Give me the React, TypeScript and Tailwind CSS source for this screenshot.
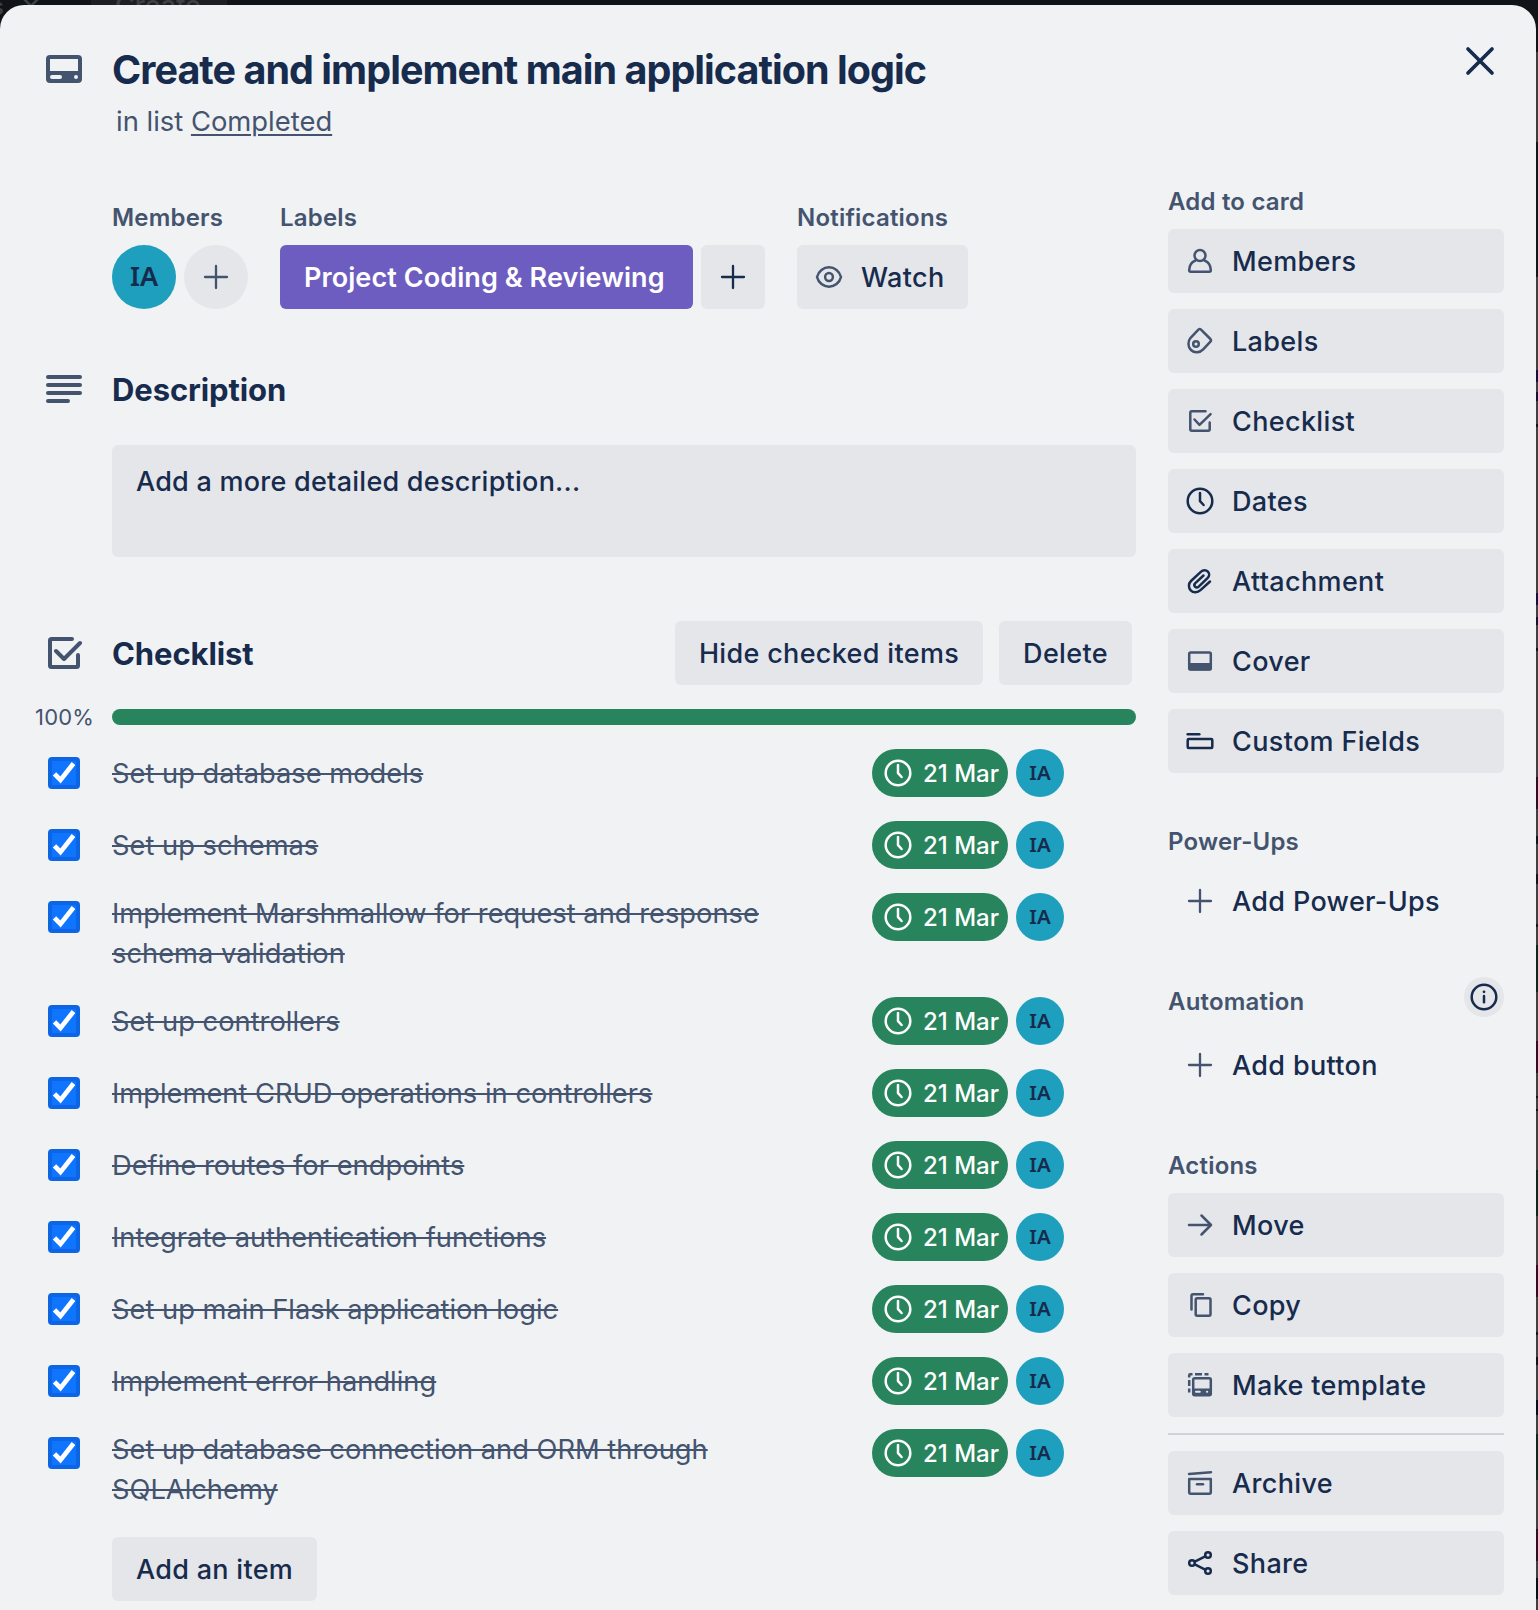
import React from "react";

const ink = "text-[#172b4d]";
const sub = "text-[#44546f]";

type Item = { lines: string[] };

const items: Item[] = [
  { lines: ["Set up database models"] },
  { lines: ["Set up schemas"] },
  { lines: ["Implement Marshmallow for request and response", "schema validation"] },
  { lines: ["Set up controllers"] },
  { lines: ["Implement CRUD operations in controllers"] },
  { lines: ["Define routes for endpoints"] },
  { lines: ["Integrate authentication functions"] },
  { lines: ["Set up main Flask application logic"] },
  { lines: ["Implement error handling"] },
  { lines: ["Set up database connection and ORM through", "SQLAlchemy"] },
];

/* Board sliver visible beside the dialog, top to bottom */
const sliver = [
  "h-[52px] bg-[#101418]",
  "h-[90px] bg-[#3c3d3e]",
  "h-[135px] bg-[#10181d]",
  "h-[93px] bg-[#3f4041]",
  "h-[12px] bg-[#15103b]",
  "h-[10px] bg-[#3f4041]",
  "h-[9px] bg-[#15103b]",
  "h-[23px] bg-[#3f4041]",
  "h-[3px] bg-[#0e1620]",
  "h-[166px] bg-[#3f4041]",
  "h-[12px] bg-[#15103b]",
  "h-[12px] bg-[#3f4041]",
  "h-[8px] bg-[#15103b]",
  "h-[23px] bg-[#3f4041]",
  "h-[3px] bg-[#0e1620]",
  "h-[126px] bg-[#3f4041]",
  "h-[32px] bg-[#300d22]",
  "h-[27px] bg-[#3f4041]",
  "h-[8px] bg-[#0e1620]",
  "h-[30px] bg-[#3f4041]",
  "h-[10px] bg-[#0e1620]",
  "h-[40px] bg-[#3f4041]",
  "h-[3px] bg-[#0e1620]",
  "h-[18px] bg-[#3f4041]",
  "h-[47px] bg-[#07291f]",
  "h-[49px] bg-[#3f4041]",
  "h-[32px] bg-[#300d22]",
  "h-[23px] bg-[#3f4041]",
  "h-[2px] bg-[#0e1620]",
  "h-[11px] bg-[#3f4041]",
  "h-[2px] bg-[#0e1620]",
  "h-[59px] bg-[#3f4041]",
  "h-[46px] bg-[#07291f]",
  "h-[49px] bg-[#3f4041]",
  "h-[32px] bg-[#300d22]",
  "h-[35px] bg-[#3f4041]",
  "h-[3px] bg-[#0e1620]",
  "h-[22px] bg-[#3f4041]",
  "h-[8px] bg-[#0e1620]",
  "h-[35px] bg-[#3f4041]",
  "h-[15px] bg-[#060f1c]",
  "h-[19px] bg-[#3f4041]",
  "h-[46px] bg-[#07291f]",
  "h-[49px] bg-[#3f4041]",
  "h-[32px] bg-[#300d22]",
  "h-[17px] bg-[#3f4041]",
  "h-[21px] bg-[#060f1c]",
  "h-[11px] bg-[#3f4041]",
];

/* 32px icons, drawn on a 32 unit grid */
function Icon({ children, color = sub }: { children: React.ReactNode; color?: string }) {
  return (
    <svg
      viewBox="0 0 32 32"
      className={"size-8 shrink-0 " + color}
      fill="none"
      stroke="currentColor"
      strokeWidth="2.5"
      strokeLinecap="round"
      strokeLinejoin="round"
    >
      {children}
    </svg>
  );
}

const Plus = ({ color = sub }: { color?: string }) => (
  <Icon color={color}>
    <path d="M5 16H27M16 5V27" strokeWidth="2.3" />
  </Icon>
);
const Eye = () => (
  <Icon>
    <path d="M4 16C5.500 10 10.500 6.300 16 6.300S26.500 10 28 16C26.500 22 21.500 25.700 16 25.700S5.500 22 4 16Z" />
    <circle cx="16" cy="16" r="3.900" />
  </Icon>
);
const User = () => (
  <Icon>
    <circle cx="16" cy="10.500" r="5.500" />
    <path d="M11.500 15.500C7.700 17 5.200 20.800 5.200 25.300Q5.200 26.800 6.700 26.800H25.300Q26.800 26.800 26.800 25.300C26.800 20.800 24.300 17 20.500 15.500" />
  </Icon>
);
const Tag = () => (
  <Icon>
    <path d="M14.400 4.600Q15.700 3.400 17 4.600L26.400 14Q27.600 15.300 26.400 16.600L19.200 24.300C15.700 28.100 10.300 28.200 7 25S3.600 16.300 6.600 12.800Z" />
    <circle cx="12" cy="19" r="2.800" />
  </Icon>
);
const CheckSquare = () => (
  <Icon>
    <path d="M21.500 6.300H7.800Q6.300 6.300 6.300 7.800V24.200Q6.300 25.700 7.800 25.700H24.200Q25.700 25.700 25.700 24.200V17.500" />
    <path d="M10.500 14.500L15.500 19.800L26.600 9.200" />
  </Icon>
);
const ClockIcon = ({ color = ink }: { color?: string }) => (
  <Icon color={color}>
    <circle cx="16" cy="16" r="12.300" />
    <path d="M16 8V16.200L19.600 20" />
  </Icon>
);
const Clip = () => (
  <Icon color={ink}>
    <path d="M26 16.500L16.500 25.200C13.300 28.200 9 27.700 6.700 25.300S4.200 18.800 7 16L16.800 6.900C19 4.800 22.100 4.800 23.900 6.700S25.500 11.300 23.500 13.200L14.700 21.600C13.500 22.800 11.900 22.700 11 21.700S10.200 19.200 11.300 18.100L19.500 10.500" />
  </Icon>
);
const Cover = () => (
  <Icon>
    <rect x="5.200" y="7.500" width="21.600" height="17" rx="1.500" />
    <path d="M4 18H28V23.500Q28 25.500 26 25.500H6Q4 25.500 4 23.500Z" fill="currentColor" stroke="none" />
  </Icon>
);
const Fields = () => (
  <Icon color={ink}>
    <path d="M3.700 9.200H15.300" />
    <rect x="3.700" y="14" width="24.600" height="9" rx="1" />
  </Icon>
);
const Arrow = () => (
  <Icon>
    <path d="M5 16H27M17.500 6.500L27 16L17.500 25.500" />
  </Icon>
);
const Copy = () => (
  <Icon>
    <path d="M19 5.200H9Q7.500 5.200 7.500 6.700V20.500" />
    <rect x="11.700" y="9.200" width="14.800" height="17.600" rx="1.500" />
  </Icon>
);
const Template = () => (
  <Icon>
    <path d="M5.200 8.500V6.200Q5.200 5.200 6.200 5.200H8.500M11 5.200H18M20.500 5.200H24.500M5.200 11V17M5.200 19.500V23.500" strokeLinecap="butt" />
    <rect x="9.200" y="9.200" width="17.600" height="17" rx="1.500" />
    <path d="M9.500 19.500H27V25Q27 26.500 25.500 26.500H11Q9.500 26.500 9.500 25Z" fill="currentColor" stroke="none" />
    <path d="M12 22.800H15.800M23 22.800H23.200" stroke="#e4e6ea" strokeWidth="2" />
  </Icon>
);
const Archive = () => (
  <Icon>
    <path d="M5 7L27 5.200" />
    <path d="M5.200 12H26.800V25.300Q26.800 26.800 25.300 26.800H6.700Q5.200 26.800 5.200 25.300Z" />
    <path d="M13 17.300H19" />
  </Icon>
);
const Share = () => (
  <Icon color={ink}>
    <circle cx="8" cy="16" r="2.800" />
    <circle cx="24" cy="8" r="2.800" />
    <circle cx="24" cy="24" r="2.800" />
    <path d="M10.800 14.600L21.200 9.400M10.800 17.400L21.200 22.600" />
  </Icon>
);

function SideButton({ icon, label, ghost }: { icon: React.ReactNode; label: string; ghost?: boolean }) {
  return (
    <button
      className={
        "flex h-16 w-full items-center gap-4 rounded-md pl-4 text-left text-[27px] leading-10 font-medium tracking-[0.35px] " +
        ink +
        (ghost ? "" : " bg-[#e4e6ea]")
      }
    >
      {icon}
      <span className="pt-0.5 whitespace-nowrap">{label}</span>
    </button>
  );
}

function SideTitle({ children }: { children: React.ReactNode }) {
  return <h3 className={"text-[24px] leading-8 font-semibold tracking-[0.2px] " + sub}>{children}</h3>;
}

function Checkbox() {
  return (
    <svg viewBox="0 0 32 32" className="size-8 shrink-0">
      <rect width="32" height="32" rx="4" fill="#0c66e4" />
      <rect x="4" y="4" width="24" height="24" fill="#0f75ff" />
      <path d="M6.500 16.800L12.500 23L25.500 6.500" fill="none" stroke="#fff" strokeWidth="4.700" />
    </svg>
  );
}

function Row({ lines }: Item) {
  const multi = lines.length > 1;
  return (
    <li className={"flex items-start " + (multi ? "h-[104px]" : "h-[72px]")}>
      <div className="flex h-[72px] w-16 shrink-0 items-center">
        <Checkbox />
      </div>
      <div
        className={
          "w-[760px] text-[27.300px] leading-10 line-through decoration-2 " + sub + (multi ? " pt-[13px]" : " pt-[17px]")
        }
      >
        {lines.map((l) => (
          <div key={l} className="whitespace-nowrap">
            {l}
          </div>
        ))}
      </div>
      <div className="flex h-[72px] items-center gap-2">
        <div className="flex h-12 w-[136px] items-center gap-[9px] rounded-full bg-[#28845c] pl-[10px] text-[24px] leading-8 font-medium text-white">
          <ClockIcon color="text-white" />
          <span className="pt-0.5 whitespace-nowrap">21 Mar</span>
        </div>
        <div className={"flex size-12 items-center justify-center rounded-full bg-[#1d9fbd] pb-0.5 font-['Noto_Sans',sans-serif] text-[20.500px] leading-none font-semibold " + ink}>
          IA
        </div>
      </div>
    </li>
  );
}

export default function App() {
  return (
    <div className="relative isolate flex h-[1610px] w-[1538px] overflow-hidden bg-[#101418] font-['Inter',sans-serif]">
      {/* Dimmed navigation bar behind the dialog */}
      <div className="absolute top-0 left-0 -z-10 flex h-10 w-full text-[#3e4144]">
        <span className="-mt-[9px] -ml-[9px] text-[24px] leading-8 font-medium">s</span>
        <svg viewBox="0 0 24 12" className="-mt-[5px] ml-[15px] h-3 w-6" fill="none" stroke="currentColor" strokeWidth="2.600">
          <path d="M1 0L12 11L23 0" />
        </svg>
        <div className="absolute top-0 left-[91px] h-8 w-[136px] bg-[#1d1f22]">
          <span className="absolute -top-[12px] left-6 text-[27px] leading-9 font-medium">Create</span>
        </div>
      </div>

      <div className="mt-[5px] flex h-[1605px] w-[1536px] shrink-0 rounded-t-[24px] bg-[#f1f2f4]">
        <main className="w-[1136px] shrink-0">
          <header className="flex pt-[41px] pl-12">
            <svg viewBox="0 0 36 28" className={"mt-[9px] -ml-[2px] h-7 w-9 shrink-0 " + sub}>
              <path
                fill="currentColor"
                fillRule="evenodd"
                d="M4 0H32Q36 0 36 4V24Q36 28 32 28H4Q0 28 0 24V4Q0 0 4 0ZM4 4V16H32V4ZM6 20A2 2 0 0 0 6 24H14A2 2 0 0 0 14 20ZM30 20A2 2 0 1 0 30 24A2 2 0 1 0 30 20Z"
              />
            </svg>
            <div className="ml-[30px]">
              <h1 className={"text-[39.500px] leading-[48px] font-bold tracking-[-0.960px] whitespace-nowrap " + ink}>
                Create and implement main application logic
              </h1>
              <p className={"mt-[7px] pl-1 text-[27.400px] leading-10 " + sub}>
                in list <a className="underline decoration-2 underline-offset-[3px]">Completed</a>
              </p>
            </div>
          </header>

          <div className="mt-[61px] ml-28 flex">
            <section className="w-[168px]">
              <SideTitle>Members</SideTitle>
              <div className="mt-[11px] flex gap-2">
                <div className={"flex size-16 items-center justify-center rounded-full bg-[#1d9fbd] pb-[3px] font-['Noto_Sans',sans-serif] text-[27px] leading-none font-semibold " + ink}>
                  IA
                </div>
                <button className="flex size-16 items-center justify-center rounded-full bg-[#e4e6ea]">
                  <Plus />
                </button>
              </div>
            </section>
            <section className="w-[517px]">
              <SideTitle>Labels</SideTitle>
              <div className="mt-[11px] flex gap-2">
                <div className="flex h-16 w-[413px] items-center rounded-md bg-[#6e5dc0] pt-0.5 pl-6 text-[27px] font-semibold tracking-[0.080px] whitespace-nowrap text-white">
                  Project Coding &amp; Reviewing
                </div>
                <button className="flex size-16 items-center justify-center rounded-md bg-[#e4e6ea]">
                  <Plus color={ink} />
                </button>
              </div>
            </section>
            <section>
              <SideTitle>Notifications</SideTitle>
              <button className={"mt-[11px] flex h-16 w-[171px] items-center gap-4 rounded-md bg-[#e4e6ea] pl-4 text-[27px] font-medium tracking-[0.350px] " + ink}>
                <Eye />
                <span className="pt-0.5">Watch</span>
              </button>
            </section>
          </div>

          <section className="mt-16 pl-12">
            <div className="flex h-8 items-center">
              <svg viewBox="0 0 36 28" className={"-ml-[2px] h-7 w-9 " + sub} stroke="currentColor" strokeWidth="4" strokeLinecap="round">
                <path d="M2 2H34M2 10H34M2 18H34M2 26H22" />
              </svg>
              <h2 className={"ml-[30px] pt-0.5 text-[31px] leading-10 font-bold tracking-[-0.100px] " + ink}>Description</h2>
            </div>
            <div className={"mt-10 ml-16 h-28 rounded-md bg-[#e4e6ea] px-6 pt-[17px] text-[27px] leading-10 font-medium tracking-[0.250px] " + ink}>
              Add a more detailed description...
            </div>
          </section>

          <section className="mt-16 pl-12">
            <div className="flex h-16 items-center">
              <svg viewBox="0 0 34 32" className={"h-8 w-[34px] " + sub} fill="none" stroke="currentColor" strokeWidth="4" strokeLinecap="round" strokeLinejoin="round">
                <path d="M24 2H3.500Q2 2 2 3.500V28.500Q2 30 3.500 30H28.500Q30 30 30 28.500V18" />
                <path d="M8 14L16 22L32 6" />
              </svg>
              <h2 className={"ml-[30px] pt-0.5 text-[31px] leading-10 font-bold tracking-[-0.100px] " + ink}>Checklist</h2>
              <div className={"mr-1 ml-auto flex gap-4 text-[27px] font-medium tracking-[0.330px] " + ink}>
                <button className="h-16 w-[308px] rounded-md bg-[#e4e6ea] pt-0.5 whitespace-nowrap">Hide checked items</button>
                <button className="h-16 w-[133px] rounded-md bg-[#e4e6ea] pt-0.5">Delete</button>
              </div>
            </div>
            <div className="mt-6 flex h-4 items-center">
              <span className={"-ml-[13px] w-[77px] text-[22px] leading-4 tracking-[0.200px] " + sub}>100%</span>
              <div className="h-4 flex-1 rounded-full bg-[#28845c]" />
            </div>
            <ul className="mt-3">
              {items.map((it) => (
                <Row key={it.lines[0]} lines={it.lines} />
              ))}
            </ul>
            <button className={"mt-4 ml-16 h-16 w-[205px] rounded-md bg-[#e4e6ea] pt-0.5 text-[27px] font-medium tracking-[0.300px] whitespace-nowrap " + ink}>
              Add an item
            </button>
          </section>
        </main>

        <aside className="relative ml-8 w-[336px] pt-[181px]">
          <button className="absolute top-[40px] right-[8px] size-8">
            <svg viewBox="0 0 32 32" className={"size-8 " + ink} stroke="currentColor" strokeWidth="3.700" strokeLinecap="round">
              <path d="M4 4L28 28M28 4L4 28" />
            </svg>
          </button>
          <SideTitle>Add to card</SideTitle>
          <div className="mt-[11px] flex flex-col gap-4">
            <SideButton icon={<User />} label="Members" />
            <SideButton icon={<Tag />} label="Labels" />
            <SideButton icon={<CheckSquare />} label="Checklist" />
            <SideButton icon={<ClockIcon />} label="Dates" />
            <SideButton icon={<Clip />} label="Attachment" />
            <SideButton icon={<Cover />} label="Cover" />
            <SideButton icon={<Fields />} label="Custom Fields" />
          </div>
          <div className="mt-[53px]">
            <SideTitle>Power-Ups</SideTitle>
            <div className="mt-[11px]">
              <SideButton icon={<Plus />} label="Add Power-Ups" ghost />
            </div>
          </div>
          <div className="mt-[44px] flex h-10 justify-between">
            <div className="pt-[9px]">
              <SideTitle>Automation</SideTitle>
            </div>
            <button className="flex size-10 items-center justify-center rounded-full bg-[#e4e6ea]">
              <Icon color={ink}>
                <circle cx="16" cy="16" r="12.300" />
                <path d="M16 15V21.300" />
                <circle cx="16" cy="10.800" r="1.400" fill="currentColor" stroke="none" />
              </Icon>
            </button>
          </div>
          <div className="mt-4">
            <SideButton icon={<Plus />} label="Add button" ghost />
          </div>
          <div className="mt-[53px]">
            <SideTitle>Actions</SideTitle>
          </div>
          <div className="mt-[11px] flex flex-col gap-4">
            <SideButton icon={<Arrow />} label="Move" />
            <SideButton icon={<Copy />} label="Copy" />
            <SideButton icon={<Template />} label="Make template" />
            <div className="h-[2px] bg-[#cbd3db]" />
            <SideButton icon={<Archive />} label="Archive" />
            <SideButton icon={<Share />} label="Share" />
          </div>
        </aside>
      </div>

      <div className="flex w-0.5 shrink-0 flex-col">
        {sliver.map((c, i) => (
          <div key={i} className={"shrink-0 " + c} />
        ))}
      </div>
    </div>
  );
}
